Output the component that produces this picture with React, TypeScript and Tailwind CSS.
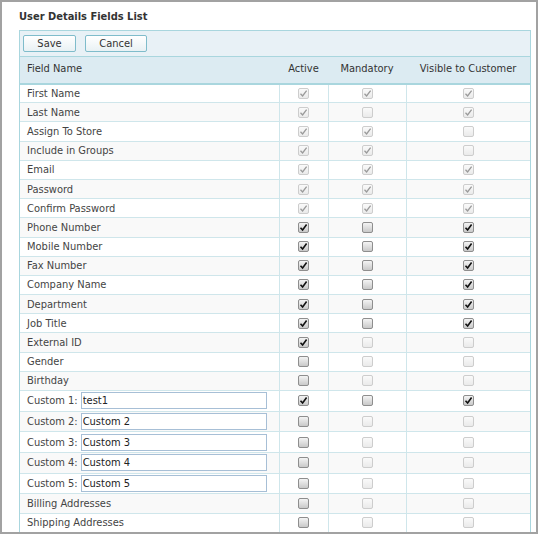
import React from 'react'

type Box = 'dc' | 'du' | 'ec' | 'eu'

const ROWS: { label: string; custom?: string; boxes: [Box, Box, Box] }[] = [
  { label: 'First Name', boxes: ['dc', 'dc', 'dc'] },
  { label: 'Last Name', boxes: ['dc', 'du', 'dc'] },
  { label: 'Assign To Store', boxes: ['dc', 'dc', 'du'] },
  { label: 'Include in Groups', boxes: ['dc', 'dc', 'du'] },
  { label: 'Email', boxes: ['dc', 'dc', 'dc'] },
  { label: 'Password', boxes: ['dc', 'dc', 'dc'] },
  { label: 'Confirm Password', boxes: ['dc', 'dc', 'dc'] },
  { label: 'Phone Number', boxes: ['ec', 'eu', 'ec'] },
  { label: 'Mobile Number', boxes: ['ec', 'eu', 'ec'] },
  { label: 'Fax Number', boxes: ['ec', 'eu', 'ec'] },
  { label: 'Company Name', boxes: ['ec', 'eu', 'ec'] },
  { label: 'Department', boxes: ['ec', 'eu', 'ec'] },
  { label: 'Job Title', boxes: ['ec', 'eu', 'ec'] },
  { label: 'External ID', boxes: ['ec', 'du', 'du'] },
  { label: 'Gender', boxes: ['eu', 'du', 'du'] },
  { label: 'Birthday', boxes: ['eu', 'du', 'du'] },
  { label: 'Custom 1:', custom: 'test1', boxes: ['ec', 'eu', 'ec'] },
  { label: 'Custom 2:', custom: 'Custom 2', boxes: ['eu', 'du', 'du'] },
  { label: 'Custom 3:', custom: 'Custom 3', boxes: ['eu', 'du', 'du'] },
  { label: 'Custom 4:', custom: 'Custom 4', boxes: ['eu', 'du', 'du'] },
  { label: 'Custom 5:', custom: 'Custom 5', boxes: ['eu', 'du', 'du'] },
  { label: 'Billing Addresses', boxes: ['eu', 'du', 'du'] },
  { label: 'Shipping Addresses', boxes: ['eu', 'du', 'du'] },
]

function Check({ kind }: { kind: Box }) {
  const disabled = kind[0] === 'd'
  const checked = kind[1] === 'c'
  return (
    <span
      className={
        'mx-auto flex h-[11px] w-[11px] items-center justify-center rounded-[2px] border ' +
        (disabled
          ? 'border-[#cdcdcd] bg-gradient-to-b from-[#fafafa] to-[#eaeaea]'
          : 'border-[#8e8e8e] bg-gradient-to-b from-[#f4f4f4] to-[#c9c9c9]')
      }
    >
      {checked && (
        <svg width="9" height="9" viewBox="0 0 9 9">
          <path
            d="M1.5 4.8 L3.6 7 L7.6 1.6"
            fill="none"
            stroke={disabled ? '#9a9a9a' : '#111'}
            strokeWidth={disabled ? 1.3 : 1.6}
          />
        </svg>
      )}
    </span>
  )
}

export default function App() {
  return (
    <div
      className="h-[534px] w-[538px] overflow-hidden border-2 border-[#a2a2a2] bg-white text-[11px] text-[#444]"
      style={{ fontFamily: '"DejaVu Sans Condensed", "Liberation Sans", sans-serif' }}
    >
      <div className="pl-[17px] pt-[7px] pb-[4px] text-[11px] font-bold text-[#333]">User Details Fields List</div>
      <div className="ml-[17px] w-[512px] border border-[#a9d6de]">
        <div className="flex h-[26px] items-center gap-[9px] border-b border-[#a9d6de] bg-[#e8f1f6] pl-[3px]">
          <button className="h-[17px] w-[53px] rounded-[2px] border border-[#7fbccb] bg-gradient-to-b from-white to-[#e9f1f4] text-[11px] leading-none text-[#333]">
            Save
          </button>
          <button className="h-[17px] w-[62px] rounded-[2px] border border-[#7fbccb] bg-gradient-to-b from-white to-[#e9f1f4] text-[11px] leading-none text-[#333]">
            Cancel
          </button>
        </div>
        <table className="w-full border-collapse">
          <thead>
            <tr className="h-[27px] border-b-2 border-[#a9d6de] bg-[#dcebf2] text-[#333]">
              <th className="w-[259px] pl-[7px] text-left font-normal">Field Name</th>
              <th className="w-[49px] text-center font-normal">Active</th>
              <th className="w-[78px] text-center font-normal">Mandatory</th>
              <th className="text-center font-normal">Visible to Customer</th>
            </tr>
          </thead>
          <tbody>
            {ROWS.map((r, i) => (
              <tr
                key={r.label}
                className={
                  'border-t border-[#cfe6eb] ' +
                  (r.custom ? 'h-[20.7px] ' : 'h-[19.2px] ') +
                  (i % 2 === 1 ? 'bg-[#f9f9f9]' : 'bg-white')
                }
              >
                <td className="border-r border-[#cfe6eb] pl-[7px] py-0 leading-none">
                  {r.custom ? (
                    <div className="flex items-center gap-[3px]">
                      <span>{r.label}</span>
                      <input
                        readOnly
                        value={r.custom}
                        className="h-[17px] w-[186px] border border-[#a7bfd6] bg-white px-[1px] text-[11px] text-[#222] outline-none"
                        style={{ fontFamily: '"DejaVu Sans Condensed", "Liberation Sans", sans-serif' }}
                      />
                    </div>
                  ) : (
                    r.label
                  )}
                </td>
                {r.boxes.map((b, j) => (
                  <td key={j} className={'py-0 ' + (j < 2 ? 'border-r border-[#cfe6eb]' : '')}>
                    <Check kind={b} />
                  </td>
                ))}
              </tr>
            ))}
          </tbody>
        </table>
      </div>
    </div>
  )
}
